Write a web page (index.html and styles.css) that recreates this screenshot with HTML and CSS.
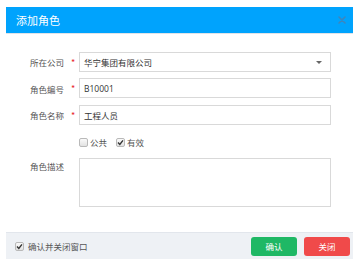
FILE: index.html
```html
<!DOCTYPE html>
<html>
<head>
<meta charset="utf-8">
<link rel="stylesheet" href="styles.css">
</head>
<body>
<div class="dialog">
  <div class="dlg-head">
    <span class="dlg-title">添加角色</span>
    <svg class="dlg-close" width="8" height="8" viewBox="0 0 8 8"><path d="M1 1L7 7M7 1L1 7" stroke="#3d86bd" stroke-width="1.6" stroke-linecap="round"/></svg>
  </div>
  <div class="dlg-body">
    <div class="form">
      <label class="lbl">所在公司</label><span class="req">*</span>
      <div class="field select"><span>华宁集团有限公司</span><span class="caret"></span></div>
      <label class="lbl">角色编号</label><span class="req">*</span>
      <div class="field gap7">B10001</div>
      <label class="lbl">角色名称</label><span class="req">*</span>
      <div class="field">工程人员</div>
      <span class="lbl"></span><span class="req"></span>
      <div class="checks">
        <span class="chk"><span class="box"></span>公共</span>
        <span class="chk"><span class="box"><svg width="7" height="7" viewBox="0 0 7 7"><path d="M1 3.6L2.8 5.4L6 1.4" fill="none" stroke="#333" stroke-width="1.4"/></svg></span>有效</span>
      </div>
      <label class="lbl lbl-top">角色描述</label><span class="req"></span>
      <div class="area"></div>
    </div>
  </div>
  <div class="dlg-foot">
    <span class="chk foot-chk"><span class="box"><svg width="7" height="7" viewBox="0 0 7 7"><path d="M1 3.6L2.8 5.4L6 1.4" fill="none" stroke="#333" stroke-width="1.4"/></svg></span>确认并关闭窗口</span>
    <div class="btns">
      <button class="btn ok">确认</button>
      <button class="btn cancel">关闭</button>
    </div>
  </div>
</div>
</body>
</html>
```
FILE: styles.css
```css
* { box-sizing: border-box; }
body {
  margin: 0;
  background: #fff;
  font-family: "Noto Sans CJK SC", "Open Sans", sans-serif;
  font-size: 8.5px;
  color: #333;
}
.dialog {
  margin: 7px 6px 0 6px;
  width: 347px;
  background: #fff;
}
.dlg-head {
  height: 27px;
  background: #00a3fd;
  border-bottom: 1px solid #dfe3e8;
  display: flex;
  align-items: center;
  justify-content: space-between;
  padding: 0 7px 0 10px;
}
.dlg-title {
  color: #fff;
  font-size: 11px;
}
.dlg-close { display: block; }
.dlg-body {
  height: 198px;
  padding-top: 18px;
}
.form {
  display: grid;
  grid-template-columns: 58px 15px 252px;
  grid-auto-rows: auto;
  row-gap: 6px;
  align-items: center;
}
.lbl {
  text-align: right;
  color: #555;
  font-size: 8.5px;
}
.lbl-top { align-self: start; padding-top: 2px; }
.req {
  color: #e8262c;
  font-size: 9px;
  text-align: center;
  padding-left: 3px;
}
.field {
  height: 20px;
  border: 1px solid #d9d9d9;
  padding: 0 4px;
  display: flex;
  align-items: center;
  font-family: "Open Sans", "Noto Sans CJK SC", sans-serif;
  color: #333;
}
.gap7 { margin-bottom: 1px; }
.select { justify-content: space-between; padding-right: 8px; }
.caret {
  width: 0; height: 0;
  border-left: 3px solid transparent;
  border-right: 3px solid transparent;
  border-top: 3px solid #666;
}
.checks {
  display: flex;
  gap: 9px;
  height: 14px;
  align-items: center;
  margin-top: 4px;
  margin-bottom: 3px;
}
.chk {
  display: inline-flex;
  align-items: center;
  gap: 2px;
  color: #555;
}
.box {
  width: 9px; height: 9px;
  border: 1px solid #b9b9b9;
  border-radius: 2px;
  background: linear-gradient(#fafafa, #e2e2e2);
  display: inline-flex;
  align-items: center;
  justify-content: center;
}
.box svg { display: block; }
.area {
  height: 49px;
  border: 1px solid #d9d9d9;
}
.dlg-foot {
  height: 27px;
  background: #eef1f5;
  border-top: 1px solid #e2e6ec;
  display: flex;
  align-items: center;
  justify-content: space-between;
  padding: 0 3px 0 9px;
}
.foot-chk { gap: 4px; }
.btns { display: flex; gap: 7px; }
.btn {
  width: 46px;
  height: 19px;
  border: none;
  border-radius: 3px;
  color: #fff;
  font-family: "Noto Sans CJK SC", sans-serif;
  font-size: 8.5px;
  padding: 0;
}
.ok { background: #1fb865; }
.cancel { background: #f04a4a; }
```
